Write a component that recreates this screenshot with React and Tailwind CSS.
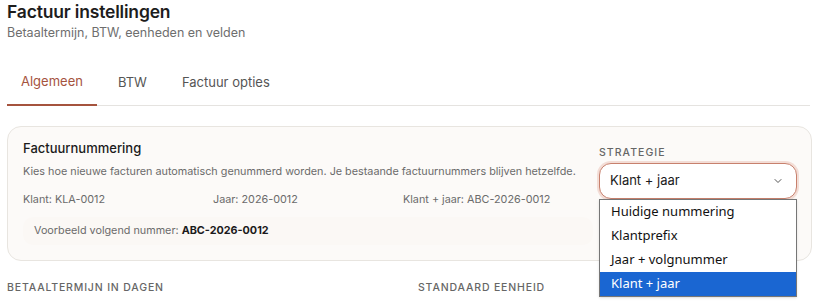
import React from 'react';

const examples = ['Klant: KLA-0012', 'Jaar: 2026-0012', 'Klant + jaar: ABC-2026-0012'];
const options = ['Huidige nummering', 'Klantprefix', 'Jaar + volgnummer', 'Klant + jaar'];

const Chevron = () => (
  <svg width="12" height="12" viewBox="0 0 24 24" fill="none" stroke="#555" strokeWidth="2" strokeLinecap="round" strokeLinejoin="round">
    <path d="m6 9 6 6 6-6" />
  </svg>
);

const App = () => {
  return (
    <div className="min-h-[301px] bg-white px-[7px] text-[#1c1c1c] font-['Inter',sans-serif] overflow-hidden">
      <h1 className="text-[17.5px] leading-[24px] font-semibold tracking-[-0.01em] text-[#1d1d1d]">Factuur instellingen</h1>
      <p className="text-[12.5px] leading-[17px] text-[#6e6e6e]">Betaaltermijn, BTW, eenheden en velden</p>

      <div className="mt-[27px] flex border-b border-[#e5e3e0] mr-[4px]">
        <button className="px-[14px] pb-[12px] pt-[4px] text-[13px] text-[#a5533e] border-b-2 border-[#a5533e] -mb-px">Algemeen</button>
        <button className="px-[21px] pb-[12px] pt-[4px] text-[13px] text-[#555]">BTW</button>
        <button className="px-[14px] pb-[12px] pt-[4px] text-[13px] text-[#555]">Factuur opties</button>
      </div>

      <div className="mt-[20px] mr-[2px] rounded-[14px] border border-[#e8e5e0] bg-[#fcfaf8] pl-[15px] pr-[14px] pt-[12px] pb-[15px] flex gap-[6px]">
        <div className="w-[570px]">
          <h2 className="text-[13px] leading-[18px] font-medium text-[#1b1b1b]">Factuurnummering</h2>
          <p className="mt-[7px] text-[10.8px] leading-[16px] text-[#6b6b6b] whitespace-nowrap">Kies hoe nieuwe facturen automatisch genummerd worden. Je bestaande factuurnummers blijven hetzelfde.</p>
          <div className="mt-[12px] grid grid-cols-3 text-[10.8px] leading-[16px] text-[#6b6b6b]">
            {examples.map((e) => (
              <span key={e}>{e}</span>
            ))}
          </div>
          <div className="mt-[9px] rounded-[10px] bg-[#fbf8f5] px-[11px] py-[6px] text-[10.8px] leading-[16px] text-[#6b6b6b]">
            Voorbeeld volgend nummer: <span className="font-bold text-[#1b1b1b]">ABC-2026-0012</span>
          </div>
        </div>
        <div className="w-[198px] pt-[7px]">
          <label className="block text-[10.5px] leading-[14px] font-medium tracking-[0.1em] text-[#666]">STRATEGIE</label>
          <div className="relative mt-[3px]">
            <div className="h-[36px] rounded-[12px] border border-[#c7806d] ring-2 ring-[#f3ddd6] bg-white pl-[10px] pr-[12px] flex items-center justify-between text-[13px] text-[#1b1b1b]">
              <span>Klant + jaar</span>
              <Chevron />
            </div>
            <ul className="absolute left-0 right-0 top-[36px] z-10 border border-[#767676] bg-white font-['Noto_Sans',sans-serif] text-[13px] text-[#111] shadow-sm">
              {options.map((o, i) => (
                <li
                  key={o}
                  className={
                    i === options.length - 1
                      ? 'h-[24px] pl-[11px] flex items-center bg-[#1a66d2] text-white'
                      : 'h-[24px] pl-[11px] flex items-center'
                  }
                >
                  {o}
                </li>
              ))}
            </ul>
          </div>
        </div>
      </div>

      <div className="mt-[20px] grid grid-cols-2 gap-[25px] mr-[10px]">
        <div>
          <label className="block text-[10.5px] leading-[14px] font-medium tracking-[0.08em] text-[#666]">BETAALTERMIJN IN DAGEN</label>
          <div className="mt-[6px] h-[36px] rounded-[12px] border border-[#e8e5e0] bg-white" />
        </div>
        <div>
          <label className="block text-[10.5px] leading-[14px] font-medium tracking-[0.08em] text-[#666]">STANDAARD EENHEID</label>
          <div className="mt-[6px] h-[36px] rounded-[12px] border border-[#e8e5e0] bg-white" />
        </div>
      </div>
    </div>
  );
};

export default App;
